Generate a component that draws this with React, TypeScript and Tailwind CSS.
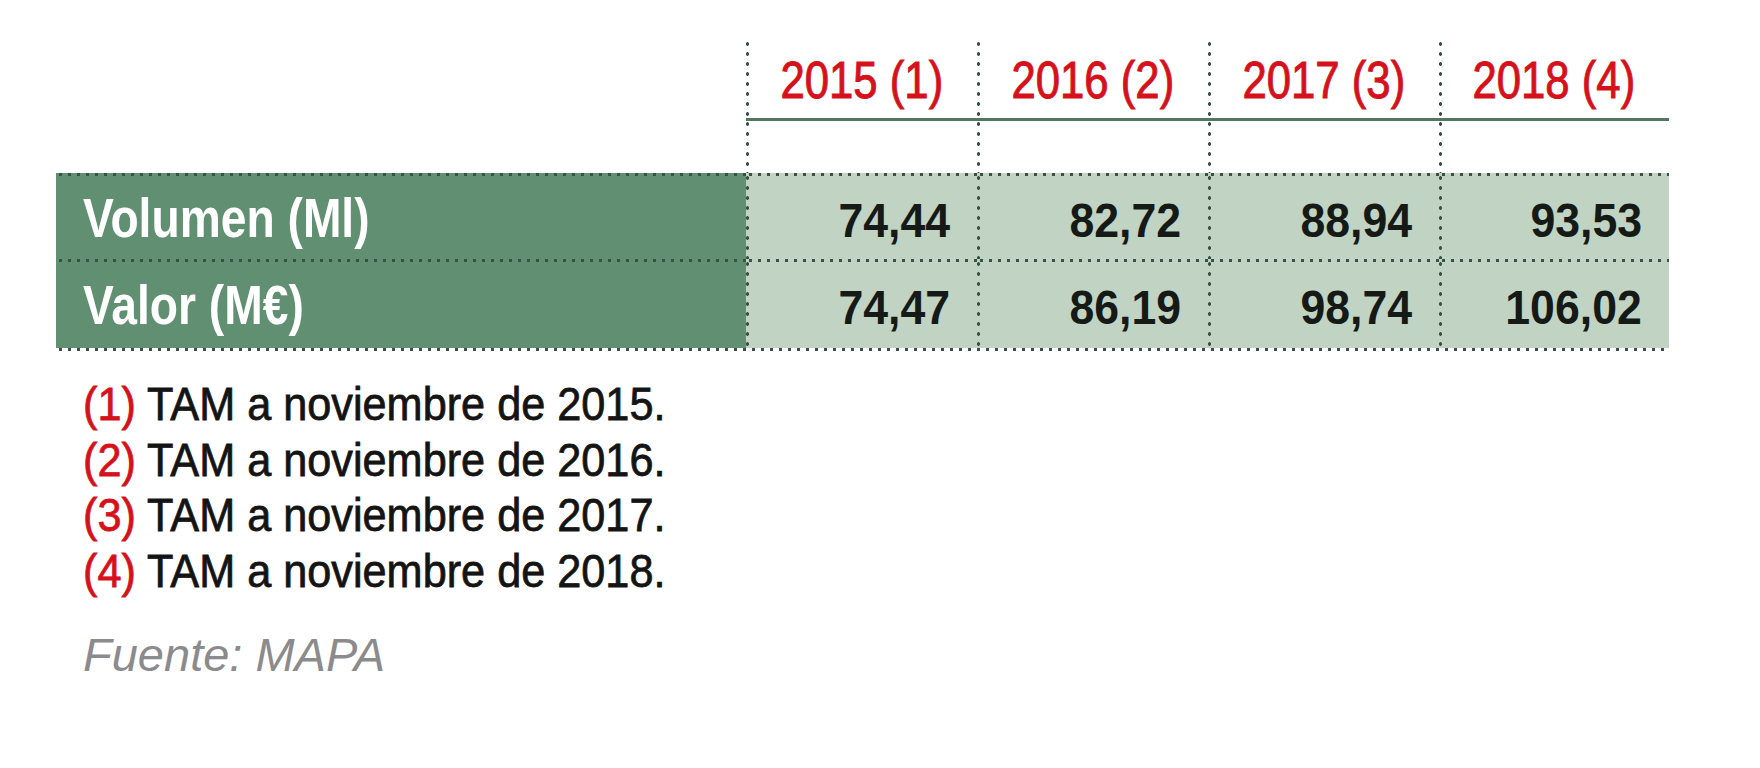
import React from "react";

const years = ["2015 (1)", "2016 (2)", "2017 (3)", "2018 (4)"];
const rows = [
  { label: "Volumen (Ml)", values: ["74,44", "82,72", "88,94", "93,53"], h: "h-[86px]" },
  { label: "Valor (M€)", values: ["74,47", "86,19", "98,74", "106,02"], h: "h-[89px]" },
];
const notes = [
  ["(1)", "TAM a noviembre de 2015."],
  ["(2)", "TAM a noviembre de 2016."],
  ["(3)", "TAM a noviembre de 2017."],
  ["(4)", "TAM a noviembre de 2018."],
];

function HeaderCell({ text }: { text: string }) {
  return (
    <div className="h-[134px] flex flex-col bg-[radial-gradient(circle,#3a5145_1.5px,transparent_2px)] bg-[length:3px_10px] bg-repeat-y bg-[position:0_0]">
      <div className="pt-[15px] h-[67px] text-center">
        <span className="inline-block origin-center scale-x-[0.84] whitespace-nowrap text-[52px] leading-[52px] text-[#d5121c] [-webkit-text-stroke:1px_#d5121c] [font-family:'Liberation_Sans',Arial,sans-serif]">
          {text}
        </span>
      </div>
      <div className="mt-[12px] h-[3px] w-full bg-[#52775f]" />
    </div>
  );
}

export default function App() {
  return (
    <div className="w-[1760px] h-[768px] overflow-hidden bg-white pt-[39px] pl-[56px]">
      <div className="w-[1613px]">
        <div className="grid grid-cols-[690px_231px_231px_231px_230px]">
          <div />
          {years.map((y) => (
            <HeaderCell key={y} text={y} />
          ))}
        </div>
        {rows.map((r) => (
          <div key={r.label} className={`grid grid-cols-[690px_231px_231px_231px_230px] ${r.h}`}>
            <div className="flex items-center pt-[3px] pl-[27px] bg-[#608f71] bg-[radial-gradient(circle,#3a5145_1.5px,transparent_2px)] bg-[length:9px_3px] bg-repeat-x bg-[position:0_0]">
              <span className="inline-block origin-left scale-x-[0.825] whitespace-nowrap text-white font-bold text-[56px] leading-[56px] [font-family:'Liberation_Sans',Arial,sans-serif]">
                {r.label}
              </span>
            </div>
            {r.values.map((v, i) => (
              <div
                key={i}
                className="flex items-center justify-end pt-[9px] pr-[27px] bg-[#c1d4c4] [background-image:radial-gradient(circle,#3a5145_1.5px,transparent_2px),radial-gradient(circle,#3a5145_1.5px,transparent_2px)] [background-size:9px_3px,3px_10px] [background-repeat:repeat-x,repeat-y] [background-position:0_0,0_0]"
              >
                <span className="inline-block origin-right scale-x-[0.93] whitespace-nowrap text-[#151a17] font-bold text-[48px] leading-[48px] [font-family:'Liberation_Sans',Arial,sans-serif]">
                  {v}
                </span>
              </div>
            ))}
          </div>
        ))}
        <div className="h-[3px] w-full bg-[radial-gradient(circle,#3a5145_1.5px,transparent_2px)] bg-[length:9px_3px] bg-repeat-x bg-[position:0_0]" />
      </div>

      <div className="mt-[25px] pl-[27px] [font-family:'Liberation_Sans',Arial,sans-serif] text-[47px] leading-[55.5px]">
        {notes.map(([n, t]) => (
          <div key={n} className="h-[55.5px]">
            <span className="inline-block origin-left scale-x-[0.92] whitespace-nowrap">
              <span className="text-[#d5121c] [-webkit-text-stroke:0.8px_#d5121c]">{n}</span>{" "}
              <span className="text-[#141414] [-webkit-text-stroke:0.8px_#141414]">{t}</span>
            </span>
          </div>
        ))}
      </div>

      <div className="mt-[34px] pl-[27px] italic text-[47px] leading-[46px] text-[#8b8b8d] [font-family:'Liberation_Sans',Arial,sans-serif]">
        Fuente: MAPA
      </div>
    </div>
  );
}
